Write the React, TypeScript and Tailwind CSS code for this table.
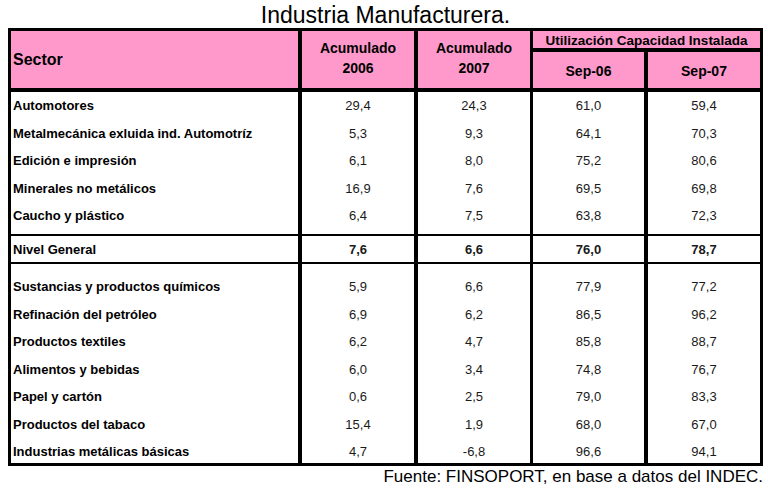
const cols = [
  "w-[291px] border-r-[4px]",
  "w-[116px] border-r-[4px]",
  "w-[115px] border-r-[3px]",
  "w-[115px] border-r-[4px]",
  "w-[112px]",
];

const group1 = [
  ["Automotores", "29,4", "24,3", "61,0", "59,4"],
  ["Metalmecánica exluida ind. Automotríz", "5,3", "9,3", "64,1", "70,3"],
  ["Edición e impresión", "6,1", "8,0", "75,2", "80,6"],
  ["Minerales no metálicos", "16,9", "7,6", "69,5", "69,8"],
  ["Caucho y plástico", "6,4", "7,5", "63,8", "72,3"],
];

const nivel = [["Nivel General", "7,6", "6,6", "76,0", "78,7"]];

const group3 = [
  ["Sustancias y productos químicos", "5,9", "6,6", "77,9", "77,2"],
  ["Refinación del petróleo", "6,9", "6,2", "86,5", "96,2"],
  ["Productos textiles", "6,2", "4,7", "85,8", "88,7"],
  ["Alimentos y bebidas", "6,0", "3,4", "74,8", "76,7"],
  ["Papel y cartón", "0,6", "2,5", "79,0", "83,3"],
  ["Productos del tabaco", "15,4", "1,9", "68,0", "67,0"],
  ["Industrias metálicas básicas", "4,7", "-6,8", "96,6", "94,1"],
];

type GroupProps = {
  rows: string[][];
  className: string;
  pad: string;
  rowH: string;
  bold?: boolean;
};

function Group({ rows, className, pad, rowH, bold }: GroupProps) {
  return (
    <div className={`flex border-black ${className}`}>
      {cols.map((c, ci) => (
        <div key={ci} className={`${c} flex flex-col border-black ${pad}`}>
          {rows.map((r, ri) => (
            <div
              key={ri}
              className={`${rowH} flex shrink-0 items-center whitespace-nowrap ${
                ci === 0 ? "pl-[2px] font-bold text-black" : "justify-center text-[#1a1a1a]"
              } ${bold ? "font-bold" : ""}`}
            >
              {r[ci]}
            </div>
          ))}
        </div>
      ))}
    </div>
  );
}

export default function App() {
  return (
    <div className="h-[494px] w-[768px] overflow-hidden bg-white font-['Liberation_Sans',Arial,sans-serif] text-black">
      <div className="ml-[8px] w-[755px]">
        <div className="h-[28px] pt-[2px] text-center text-[23px] leading-[26px]">
          Industria Manufacturera.
        </div>

        <div className="border-[3px] border-black text-[13px] leading-[15px]">
          {/* header */}
          <div className="flex h-[61px] border-b-[4px] border-black bg-[#ff99cc] font-bold">
            <div className={`${cols[0]} flex items-center border-black pl-[2px] text-[16px]`}>
              Sector
            </div>
            <div className={`${cols[1]} flex flex-col items-center justify-center border-black pb-[3px] text-[14px] leading-[20px]`}>
              <span>Acumulado</span>
              <span>2006</span>
            </div>
            <div className={`${cols[2]} flex flex-col items-center justify-center border-black pb-[3px] text-[14px] leading-[20px]`}>
              <span>Acumulado</span>
              <span>2007</span>
            </div>
            <div className="flex w-[227px] flex-col">
              <div className="flex h-[21px] items-center justify-center border-b-[4px] border-black pt-[1px] text-[13.5px] whitespace-nowrap">
                Utilización Capacidad Instalada
              </div>
              <div className="flex flex-1 text-[14px]">
                <div className="flex w-[115px] items-center justify-center border-r-[4px] border-black pt-[2px]">
                  Sep-06
                </div>
                <div className="flex flex-1 items-center justify-center pt-[2px]">Sep-07</div>
              </div>
            </div>
          </div>

          <Group rows={group1} className="h-[144px] border-b-[2px]" pad="" rowH="h-[27.5px]" />
          <Group rows={nivel} className="h-[28px] border-b-[2px]" pad="" rowH="h-[26px]" bold />
          <Group rows={group3} className="h-[199px]" pad="pt-[9px]" rowH="h-[27.5px]" />
        </div>

        <div className="mt-[2px] text-right text-[17px] leading-[17px] whitespace-nowrap">
          Fuente: FINSOPORT, en base a datos del INDEC.
        </div>
      </div>
    </div>
  );
}
